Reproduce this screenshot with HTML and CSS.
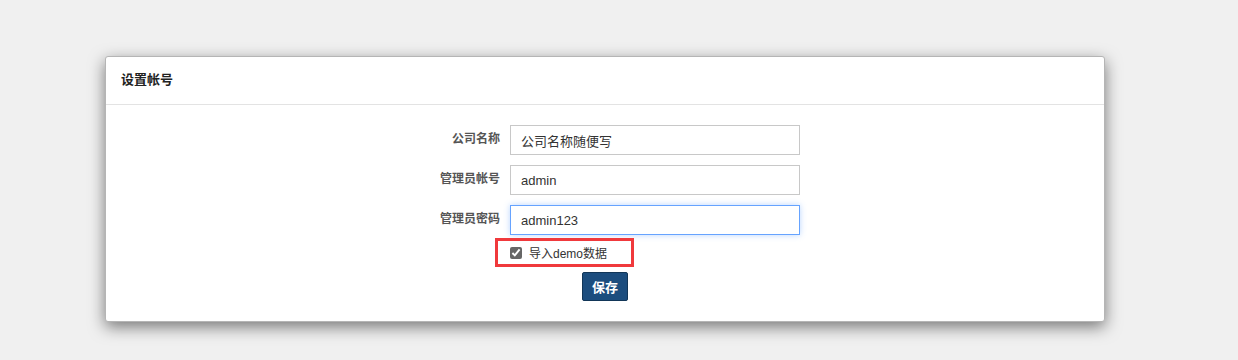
FILE: index.html
```html
<!DOCTYPE html>
<html lang="zh-CN">
<head>
  <meta charset="UTF-8">
  <title>设置帐号</title>
  <link rel="stylesheet" href="styles.css">
</head>
<body>

  <div class="panel">
    <div class="panel-heading">设置帐号</div>

    <form class="panel-body">
      <div class="form-row">
        <label for="company">公司名称</label>
        <input type="text" id="company" value="公司名称随便写">
      </div>
      <div class="form-row">
        <label for="account">管理员帐号</label>
        <input type="text" id="account" value="admin">
      </div>
      <div class="form-row">
        <label for="password">管理员密码</label>
        <input type="text" id="password" class="focused" value="admin123">
      </div>

      <div class="check-row">
        <div class="highlight">
          <input type="checkbox" id="demo" checked>
          <label for="demo">导入demo数据</label>
        </div>
      </div>

      <div class="btn-row">
        <button type="button" class="btn-save">保存</button>
      </div>
    </form>
  </div>

</body>
</html>
```

FILE: styles.css
```css
* {
  box-sizing: border-box;
}

body {
  margin: 0;
  padding: 56px 0 0 105px;
  background: #f0f0f0;
  font-family: "Liberation Sans", "Noto Sans CJK SC", sans-serif;
  color: #333;
  height: 360px;
  overflow: hidden;
}

.panel {
  width: 1000px;
  background: #fff;
  border: 1px solid #b5b5b5;
  border-radius: 3px;
  box-shadow: 0 5px 16px rgba(0, 0, 0, 0.5);
}

.panel-heading {
  height: 48px;
  padding: 0 15px;
  line-height: 46px;
  font-size: 13px;
  font-weight: bold;
  color: #222;
  border-bottom: 1px solid #e3e3e3;
}

.panel-body {
  padding: 20px 0 20px;
}

.form-row {
  display: flex;
  align-items: center;
  margin-bottom: 10px;
}

.form-row label {
  width: 394px;
  text-align: right;
  font-size: 12px;
  font-weight: bold;
  color: #555;
  margin-right: 10px;
  position: relative;
  top: -3px;
}

.form-row input {
  width: 290px;
  height: 30px;
  padding: 0 10px;
  border: 1px solid #c8c8c8;
  border-radius: 0;
  font-family: "Liberation Sans", "Noto Sans CJK SC", sans-serif;
  font-size: 13px;
  color: #333;
  outline: none;
}

.form-row input.focused {
  border-color: #66a3ff;
  box-shadow: 0 0 6px rgba(102, 163, 255, 0.45);
}

.check-row {
  margin-top: -7px;
  padding-left: 389px;
}

.highlight {
  display: inline-flex;
  align-items: center;
  width: 139px;
  height: 29px;
  padding-left: 12px;
  border: 3px solid #f0393c;
}

.highlight input {
  margin: 0 7px 0 0;
  width: 12px;
  height: 12px;
  accent-color: #666;
}

.highlight label {
  font-size: 12px;
  color: #333;
}

.btn-row {
  margin-top: 5px;
  text-align: center;
}

.btn-save {
  width: 46px;
  height: 29px;
  padding: 0;
  background: #1c4d7e;
  border: 1px solid #123658;
  border-radius: 2px;
  color: #fff;
  font-family: "Noto Sans CJK SC", sans-serif;
  font-size: 13px;
  font-weight: bold;
  cursor: pointer;
}
```
